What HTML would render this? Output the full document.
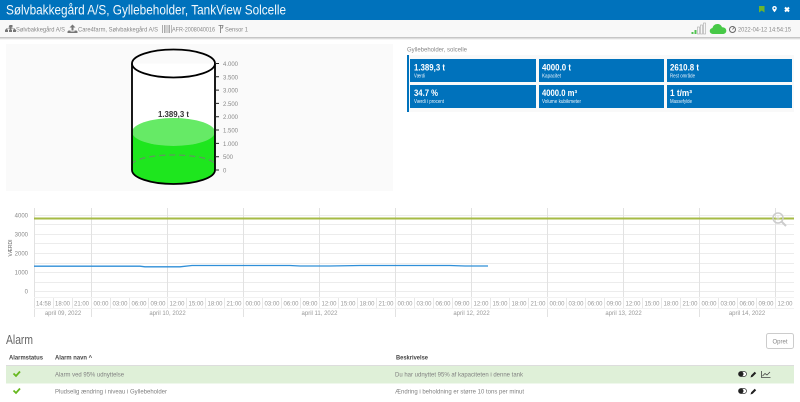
<!DOCTYPE html>
<html><head><meta charset="utf-8"><style>
html,body{margin:0;padding:0;background:#fff;width:800px;height:402px;overflow:hidden}
svg{display:block;filter:blur(.3px)}
text{font-family:"Liberation Sans",sans-serif}
.s{font-size:6.5px;fill:#888}
.w{font-size:9px;font-weight:bold;fill:#fff}
.l{font-size:5px;fill:#e8f2fa}
.a{font-size:6.5px;fill:#808080}
.h{font-size:6.5px;font-weight:bold;fill:#444}
.t{font-size:6px;fill:#999;text-anchor:middle}
.d{font-size:6px;fill:#999;text-anchor:middle}
.y{font-size:6px;fill:#888;text-anchor:end}
.g{stroke:#ececec;stroke-width:1}
</style></head><body>
<svg width="800" height="402" viewBox="0 0 800 402" xmlns="http://www.w3.org/2000/svg">
<defs><linearGradient id="sh" x1="0" y1="0" x2="0" y2="1"><stop offset="0" stop-color="#bbb"/><stop offset="1" stop-color="#fff"/></linearGradient></defs>
<rect x="0" y="0" width="800" height="20" fill="#0072bc"/>
<rect x="0" y="20" width="800" height="17" fill="#f8f8f8"/>
<rect x="0" y="37" width="800" height="3" fill="url(#sh)"/>
<text x="6" y="14.500" font-size="14" fill="#f2f8fc" textLength="280" lengthAdjust="spacingAndGlyphs">Sølvbakkegård A/S, Gyllebeholder, TankView Solcelle</text>
<path d="M759 6h5.500v6.500l-2.750-2-2.750 2z" fill="#6cb52d"/>
<path d="M774.500 6a2.300 2.300 0 0 0-2.300 2.300c0 1.600 2.300 4 2.300 4s2.300-2.400 2.300-4a2.300 2.300 0 0 0-2.300-2.300z" fill="#fff"/><circle cx="774.500" cy="8.300" r=".9" fill="#0072bc"/>
<path d="M785 7.500l4 4M789 7.500l-4 4" stroke="#fff" stroke-width="2"/>

<path d="M9.500 25h3v2.500h-1v1h3.500v1h1v2.500h-3v-2.500h1v-.5h-3v.5h1v2.500h-3v-2.500h1v-.5h-3v.5h1v2.500h-3v-2.500h1v-1h3.500v-1h-1z" fill="#777"/>
<text class="s" x="16" y="31.500" textLength="49" lengthAdjust="spacingAndGlyphs">Sølvbakkegård A/S</text>
<path d="M72.500 24.500l3 3h-2v3h-2v-3h-2zM68.500 30.500h2v1h4v-1h2l1 1v1.500h-10v-1.500z" fill="#777"/>
<text class="s" x="78" y="31.500" textLength="80" lengthAdjust="spacingAndGlyphs">Care4farm, Sølvbakkegård A/S</text>
<path d="M162 25h1v8h-1zM164 25h1.500v8h-1.500zM166.500 25h1v8h-1zM168.500 25h1.500v8h-1.500zM171 25h.8v8h-.8z" fill="#aaa"/>
<text class="s" x="172" y="31.500" textLength="43" lengthAdjust="spacingAndGlyphs">AFR-2008040016</text>
<path d="M220.500 25v8M218.500 25.500h4.500l-.5 2.500h-2" stroke="#777" stroke-width=".8" fill="none"/>
<text class="s" x="225" y="31.500" textLength="23" lengthAdjust="spacingAndGlyphs">Sensor 1</text>

<rect x="691.500" y="32" width="2" height="2" fill="#4fc24f"/>
<rect x="694.500" y="30" width="2" height="4" fill="#4fc24f"/>
<rect x="697.500" y="27" width="2" height="7" fill="#f8f8f8" stroke="#aaa" stroke-width=".6"/>
<rect x="700.500" y="25" width="2" height="9" fill="#f8f8f8" stroke="#aaa" stroke-width=".6"/>
<rect x="703.500" y="23" width="2" height="11" fill="#f8f8f8" stroke="#aaa" stroke-width=".6"/>
<path d="M713 34a3 3 0 0 1-.5-6c.500-2.500 2.500-4 5-4 2.300 0 3.800 1.300 4.500 3.200 2.400 0 4.300 1.200 4.300 3.500 0 2.100-1.700 3.300-3.800 3.300z" fill="#47c947"/>
<circle cx="732.500" cy="29.500" r="3" fill="none" stroke="#666" stroke-width="1"/><path d="M732.500 29.500l1.500-2" stroke="#666" stroke-width=".8"/>
<text class="s" x="738" y="31.500" textLength="53" lengthAdjust="spacingAndGlyphs">2022-04-12 14:54:15</text>

<rect x="6" y="44" width="387" height="147" fill="#fafafa"/>
<path d="M132 63.500V170a41.500 14 0 0 0 83 0V63.500z" fill="#fff"/>
<path d="M132 132V170a41.500 14 0 0 0 83 0V132z" fill="#1ee61e"/>
<ellipse cx="173.500" cy="132" rx="41.500" ry="14" fill="#66ea66"/>
<path d="M132 165a41.500 10 0 0 1 83 0" fill="none" stroke="#5e9a5e" stroke-width="1.300" stroke-dasharray="6 4"/>
<path d="M132 63.500V170a41.500 14 0 0 0 83 0V63.500" fill="none" stroke="#000" stroke-width="1.800"/>
<ellipse cx="173.500" cy="63.500" rx="41.500" ry="14" fill="none" stroke="#000" stroke-width="1.800"/>
<text x="173.500" y="117" font-size="8" font-weight="bold" fill="#333" text-anchor="middle" textLength="31" lengthAdjust="spacingAndGlyphs">1.389,3 t</text>
<path d="M215 63.500h4M215 76.800h4M215 90.100h4M215 103.400h4M215 116.700h4M215 130h4M215 143.400h4M215 156.700h4M215 170h4" fill="none" stroke="#222" stroke-width="1"/>
<g font-size="6" fill="#888">
<text x="223" y="66">4.000</text><text x="223" y="79.300">3.500</text><text x="223" y="92.600">3.000</text><text x="223" y="105.900">2.500</text><text x="223" y="119.200">2.000</text><text x="223" y="132.500">1.500</text><text x="223" y="145.900">1.000</text><text x="223" y="159.200">500</text><text x="223" y="172.500">0</text>
</g>

<text class="s" x="407" y="51.500" textLength="60" lengthAdjust="spacingAndGlyphs">Gyllebeholder, solcelle</text>
<rect x="407" y="55" width="387" height="57" fill="#f9f9f9"/>
<rect x="407" y="55" width="2" height="57" fill="#0072bc"/>
<g fill="#0072bc">
<rect x="410" y="59" width="126" height="23"/><rect x="539" y="59" width="125" height="23"/><rect x="667" y="59" width="125" height="23"/>
<rect x="410" y="85" width="126" height="23"/><rect x="539" y="85" width="125" height="23"/><rect x="667" y="85" width="125" height="23"/>
</g>
<text class="w" x="414" y="70.500" textLength="31" lengthAdjust="spacingAndGlyphs">1.389,3 t</text>
<text class="l" x="414" y="77.500" textLength="11" lengthAdjust="spacingAndGlyphs">Værdi</text>
<text class="w" x="542" y="70.500" textLength="29" lengthAdjust="spacingAndGlyphs">4000.0 t</text>
<text class="l" x="542" y="77.500" textLength="19" lengthAdjust="spacingAndGlyphs">Kapacitet</text>
<text class="w" x="670" y="70.500" textLength="29" lengthAdjust="spacingAndGlyphs">2610.8 t</text>
<text class="l" x="670" y="77.500" textLength="25" lengthAdjust="spacingAndGlyphs">Rest område</text>
<text class="w" x="414" y="96" textLength="24" lengthAdjust="spacingAndGlyphs">34.7 %</text>
<text class="l" x="414" y="103" textLength="30" lengthAdjust="spacingAndGlyphs">Værdi i procent</text>
<text class="w" x="542" y="96" textLength="35" lengthAdjust="spacingAndGlyphs">4000.0 m³</text>
<text class="l" x="542" y="103" textLength="39" lengthAdjust="spacingAndGlyphs">Volume kubikmeter</text>
<text class="w" x="670" y="96" textLength="22" lengthAdjust="spacingAndGlyphs">1 t/m³</text>
<text class="l" x="670" y="103" textLength="22" lengthAdjust="spacingAndGlyphs">Massefylde</text>

<g class="g">
<path d="M34 215.500H794M34 224.500H794M34 234.500H794M34 243.500H794M34 253.500H794M34 263.500H794M34 272.500H794M34 282.500H794M34 291.500H794" />
<path d="M34.500 208V317M91.500 208V317M243.500 208V317M395.500 208V317M547.500 208V317M699.500 208V317" stroke="#e2e2e2"/>
<path d="M167.500 208V298M319.500 208V298M471.500 208V298M623.500 208V298M775.500 208V298" stroke="#e2e2e2"/>
<path d="M34 297.500H794M34 308.500H794" stroke="#f2f2f2"/>
<path d="M53.500 298v10M72.500 298v10M91.500 298v10M110.500 298v10M129.500 298v10M148.500 298v10M167.500 298v10M186.500 298v10M205.500 298v10M224.500 298v10M243.500 298v10M262.500 298v10M281.500 298v10M300.500 298v10M319.500 298v10M338.500 298v10M357.500 298v10M376.500 298v10M395.500 298v10M414.500 298v10M433.500 298v10M452.500 298v10M471.500 298v10M490.500 298v10M509.500 298v10M528.500 298v10M547.500 298v10M566.500 298v10M585.500 298v10M604.500 298v10M623.500 298v10M642.500 298v10M661.500 298v10M680.500 298v10M699.500 298v10M718.500 298v10M737.500 298v10M756.500 298v10M775.500 298v10" stroke="#e8e8e8"/>
</g>
<rect x="34" y="217.500" width="760" height="2" fill="#a6bb45"/>
<path d="M34 266.200H140L145 266.800H180L192 265.500H290L300 266H330L360 265.500H450L465 266H488" fill="none" stroke="#2f8fd8" stroke-width="1.300"/>
<circle cx="778" cy="218" r="5" fill="none" stroke="#ccc" stroke-width="1.500"/><path d="M781.500 221.500l4.500 4.500" stroke="#ccc" stroke-width="2"/><path d="M775.500 218h5M778 215.500v5" stroke="#ddd" stroke-width=".8"/>

<text class="y" x="28" y="217.500">4000</text><text class="y" x="28" y="236.500">3000</text><text class="y" x="28" y="255.500">2000</text><text class="y" x="28" y="274.500">1000</text><text class="y" x="28" y="293.500">0</text>
<text transform="translate(12 248) rotate(-90)" font-size="5" fill="#666" text-anchor="middle">VÆRDI</text>

<text class="t" x="43.500" y="305.500">14:58</text><text class="t" x="62.500" y="305.500">18:00</text><text class="t" x="81.500" y="305.500">21:00</text>
<text class="t" x="101" y="305.500">00:00</text><text class="t" x="120" y="305.500">03:00</text><text class="t" x="139" y="305.500">06:00</text><text class="t" x="158" y="305.500">09:00</text><text class="t" x="177" y="305.500">12:00</text><text class="t" x="196" y="305.500">15:00</text><text class="t" x="215" y="305.500">18:00</text><text class="t" x="234" y="305.500">21:00</text>
<text class="t" x="253" y="305.500">00:00</text><text class="t" x="272" y="305.500">03:00</text><text class="t" x="291" y="305.500">06:00</text><text class="t" x="310" y="305.500">09:00</text><text class="t" x="329" y="305.500">12:00</text><text class="t" x="348" y="305.500">15:00</text><text class="t" x="367" y="305.500">18:00</text><text class="t" x="386" y="305.500">21:00</text>
<text class="t" x="405" y="305.500">00:00</text><text class="t" x="424" y="305.500">03:00</text><text class="t" x="443" y="305.500">06:00</text><text class="t" x="462" y="305.500">09:00</text><text class="t" x="481" y="305.500">12:00</text><text class="t" x="500" y="305.500">15:00</text><text class="t" x="519" y="305.500">18:00</text><text class="t" x="538" y="305.500">21:00</text>
<text class="t" x="557" y="305.500">00:00</text><text class="t" x="576" y="305.500">03:00</text><text class="t" x="595" y="305.500">06:00</text><text class="t" x="614" y="305.500">09:00</text><text class="t" x="633" y="305.500">12:00</text><text class="t" x="652" y="305.500">15:00</text><text class="t" x="671" y="305.500">18:00</text><text class="t" x="690" y="305.500">21:00</text>
<text class="t" x="709" y="305.500">00:00</text><text class="t" x="728" y="305.500">03:00</text><text class="t" x="747" y="305.500">06:00</text><text class="t" x="766" y="305.500">09:00</text><text class="t" x="785" y="305.500">12:00</text>

<text class="d" x="63" y="315">april 09, 2022</text><text class="d" x="167.500" y="315">april 10, 2022</text><text class="d" x="319.500" y="315">april 11, 2022</text><text class="d" x="471.500" y="315">april 12, 2022</text><text class="d" x="623.500" y="315">april 13, 2022</text><text class="d" x="747" y="315">april 14, 2022</text>

<text x="6" y="344" font-size="12.500" fill="#666" textLength="27" lengthAdjust="spacingAndGlyphs">Alarm</text>
<rect x="766.500" y="333.500" width="27" height="15" rx="2" fill="#fff" stroke="#ccc"/>
<text x="772.500" y="343.500" font-size="6" fill="#888" textLength="15" lengthAdjust="spacingAndGlyphs">Opret</text>

<text class="h" x="9" y="359.500" textLength="34" lengthAdjust="spacingAndGlyphs">Alarmstatus</text>
<text class="h" x="55" y="359.500" textLength="37" lengthAdjust="spacingAndGlyphs">Alarm navn ^</text>
<text class="h" x="396" y="359.500" textLength="32" lengthAdjust="spacingAndGlyphs">Beskrivelse</text>
<rect x="6" y="365" width="788" height="1" fill="#ddd"/>
<rect x="6" y="366" width="788" height="17.500" fill="#dff0d8"/>
<path d="M13.500 373.500l2.500 2.500 4-4.500" fill="none" stroke="#66b81e" stroke-width="1.800"/>
<path d="M13.500 390.500l2.500 2.500 4-4.500" fill="none" stroke="#66b81e" stroke-width="1.800"/>
<text class="a" x="55" y="376.500" textLength="69" lengthAdjust="spacingAndGlyphs">Alarm ved 95% udnyttelse</text>
<text class="a" x="395" y="376.500" textLength="128" lengthAdjust="spacingAndGlyphs">Du har udnyttet 95% af kapaciteten i denne tank</text>
<text class="a" x="55" y="393.500" textLength="112" lengthAdjust="spacingAndGlyphs">Pludselig ændring i niveau i Gyllebeholder</text>
<text class="a" x="395" y="393.500" textLength="129" lengthAdjust="spacingAndGlyphs">Ændring i beholdning er større 10 tons per minut</text>

<rect x="738.500" y="371.500" width="8" height="5" rx="2.500" fill="#fff" stroke="#333" stroke-width=".7"/><circle cx="741" cy="374" r="2.500" fill="#222"/>
<path d="M750.500 377.500l.7-2.200 3.500-3.500 1.500 1.500-3.500 3.500z" fill="#222"/>
<path d="M761.500 371v6.500h9M762.500 376l2.500-2.500 2 1.500 3-3" fill="none" stroke="#444" stroke-width=".8"/>
<rect x="738.500" y="388.500" width="8" height="5" rx="2.500" fill="#fff" stroke="#333" stroke-width=".7"/><circle cx="741" cy="391" r="2.500" fill="#222"/>
<path d="M750.500 394.500l.7-2.200 3.500-3.500 1.500 1.500-3.500 3.500z" fill="#222"/>
</svg>
</body></html>
